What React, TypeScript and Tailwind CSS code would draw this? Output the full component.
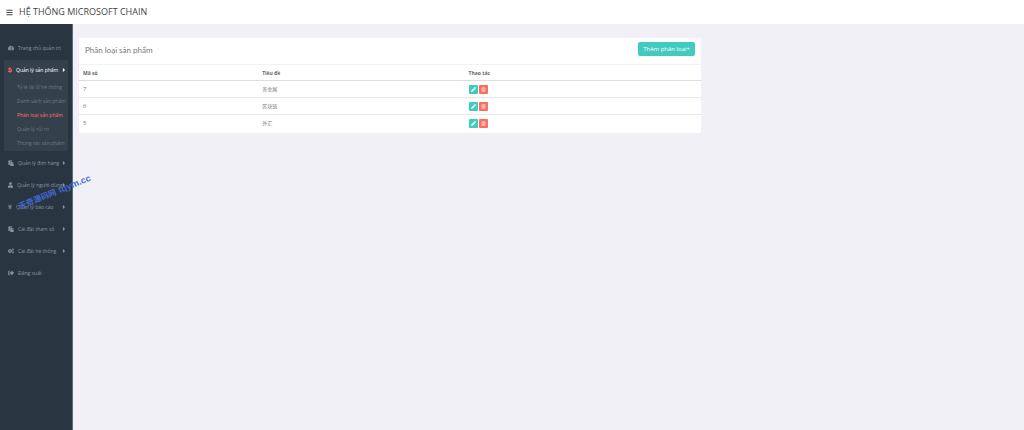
import { useState } from "react";
import type { ReactNode } from "react";
import { clsx } from "clsx";
import {
  FaBars,
  FaBtc,
  FaCaretRight,
  FaCogs,
  FaPaste,
  FaPencilAlt,
  FaSignOutAlt,
  FaTachometerAlt,
  FaUser,
  FaYenSign,
} from "react-icons/fa";

type MenuItem = {
  label: string;
  icon: ReactNode;
  children?: string[];
  hasArrow?: boolean;
};

const menu: MenuItem[] = [
  { label: "Trang chủ quản trị", icon: <FaTachometerAlt className="size-[6px]" /> },
  {
    label: "Quản lý sản phẩm",
    icon: <FaBtc className="h-[6px] w-1" />,
    hasArrow: true,
    children: [
      "Tỷ lệ lãi lỗ hệ thống",
      "Danh sách sản phẩm",
      "Phân loại sản phẩm",
      "Quản lý rủi ro",
      "Thùng rác sản phẩm",
    ],
  },
  { label: "Quản lý đơn hàng", icon: <FaPaste className="size-[6px]" />, hasArrow: true },
  { label: "Quản lý người dùng", icon: <FaUser className="h-[6px] w-[5px]" />, hasArrow: true },
  { label: "Quản lý báo cáo", icon: <FaYenSign className="h-[6px] w-1" />, hasArrow: true },
  { label: "Cài đặt tham số", icon: <FaPaste className="size-[6px]" />, hasArrow: true },
  { label: "Cài đặt hệ thống", icon: <FaCogs className="size-[6px]" />, hasArrow: true },
  { label: "Đăng xuất", icon: <FaSignOutAlt className="size-[6px]" /> },
];

const categories = [
  { id: 7, title: "贵金属" },
  { id: 6, title: "区块链" },
  { id: 5, title: "外汇" },
];

function TrashIcon() {
  return (
    <svg viewBox="0 0 14 14" className="size-[5px]" fill="none" stroke="currentColor" strokeWidth="1.4">
      <path d="M1 3.5h12M5 3V1h4v2M2.8 4v9h8.4V4M5.3 6v5M7 6v5M8.7 6v5" />
    </svg>
  );
}

function Sidebar() {
  const [active, setActive] = useState("Phân loại sản phẩm");

  return (
    <aside className="relative w-[73px] shrink-0 border-r border-[#5c6b7c] bg-[#2a3542] pt-[14px]">
      <nav>
        <ul className="flex flex-col gap-[2px] px-1">
          {menu.map((item) => (
            <li
              key={item.label}
              className={clsx("rounded-xs", item.children && "bg-[#35404d] pb-px")}
            >
              <a
                href="#"
                className={clsx(
                  "flex h-5 items-center gap-1 pr-px pl-1 whitespace-nowrap",
                  item.children ? "font-medium text-white" : "text-[#8a94a1]",
                )}
              >
                <span className={clsx("shrink-0", item.children && "text-[#ff6c60]")}>
                  {item.icon}
                </span>
                <span className="min-w-0 flex-1">{item.label}</span>
                {item.hasArrow && <FaCaretRight className="size-[6px] shrink-0" />}
              </a>
              {item.children && (
                <ul>
                  {item.children.map((child) => (
                    <li key={child}>
                      <a
                        href="#"
                        onClick={() => setActive(child)}
                        className={clsx(
                          "block h-[14px] pl-[13px] leading-[14px] whitespace-nowrap",
                          child === active ? "font-medium text-[#ff6c60]" : "text-[#6f7986]",
                        )}
                      >
                        {child}
                      </a>
                    </li>
                  ))}
                </ul>
              )}
            </li>
          ))}
        </ul>
      </nav>
      <div className="pointer-events-none absolute top-[161px] left-4 flex -rotate-[22deg] items-center gap-[3px] text-[8px] leading-[14px] font-bold whitespace-nowrap text-[#4169d0]">
        <span>天奇源码网</span>
        <span className="font-['Liberation_Sans',sans-serif] text-[9px]">tqym.cc</span>
      </div>
    </aside>
  );
}

function CategoryTable() {
  return (
    <table className="w-full table-fixed text-left">
      <thead>
        <tr className="h-4 border-t border-b border-t-[#eff2f7] border-b-[#dddddd] text-[#666666]">
          <th className="w-[28.8%] pl-1 font-bold">Mã số</th>
          <th className="w-[33.2%] pl-1 font-bold">Tiêu đề</th>
          <th className="pl-1 font-bold">Thao tác</th>
        </tr>
      </thead>
      <tbody>
        {categories.map((category) => (
          <tr key={category.id} className="h-[17px] border-t border-[#e6e6ec]">
            <td className="pl-1 text-[6px]">{category.id}</td>
            <td className="pl-1">{category.title}</td>
            <td className="pl-1">
              <div className="flex gap-px text-white">
                <button
                  aria-label="Sửa"
                  className="flex size-[9px] items-center justify-center rounded-[1px] bg-[#41cac0]"
                >
                  <FaPencilAlt className="size-[5px]" />
                </button>
                <button
                  aria-label="Xóa"
                  className="flex size-[9px] items-center justify-center rounded-[1px] bg-[#ff6c60]"
                >
                  <TrashIcon />
                </button>
              </div>
            </td>
          </tr>
        ))}
      </tbody>
    </table>
  );
}

export default function App() {
  return (
    <div className="flex min-h-screen flex-col bg-[#f1f0f7] font-['Open_Sans','Noto_Sans_CJK_SC',sans-serif] text-[5px] leading-[8px] text-[#797979]">
      <header className="flex h-6 items-center gap-[6px] bg-white px-[6px] text-[#444444]">
        <button aria-label="Menu">
          <FaBars className="size-[7px]" />
        </button>
        <a href="#" className="text-[9px] leading-3 uppercase">
          Hệ thống Microsoft Chain
        </a>
      </header>
      <div className="flex flex-1">
        <Sidebar />
        <main className="min-w-0 flex-1 pt-[14px] pr-[6px] pl-[3px]">
          <div className="w-2/3 px-[3px]">
            <section className="overflow-hidden rounded-xs bg-white pb-px">
              <div className="flex h-[26px] items-start justify-between px-[6px] pt-1">
                <h1 className="pt-[2px] font-['Lato','Open_Sans',sans-serif] text-[8px] leading-3">
                  Phân loại sản phẩm
                </h1>
                <button className="h-[14px] rounded-xs bg-[#41cac0] px-[5px] text-[6px] text-white">
                  Thêm phân loại+
                </button>
              </div>
              <CategoryTable />
            </section>
          </div>
        </main>
      </div>
    </div>
  );
}
